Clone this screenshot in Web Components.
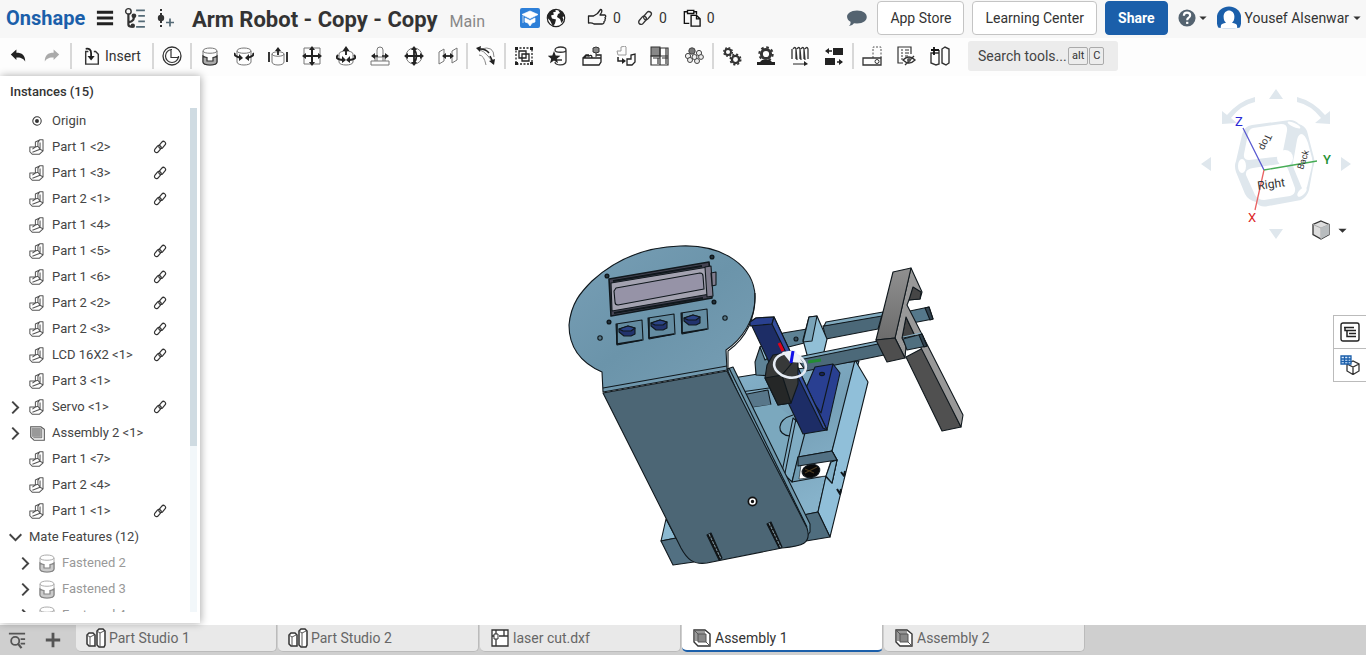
<!DOCTYPE html>
<html lang="en">
<head>
<meta charset="utf-8">
<title>Arm Robot - Copy - Copy</title>
<style>
html,body{margin:0;height:100%}
body{font-family:Roboto,"Liberation Sans",sans-serif;font-size:14px;line-height:20px;color:#333;background:#fff;overflow:hidden}
</style>
</head>
<body>
<cad-app></cad-app>
<script>
const PART = '<path d="M1 9.500h6.500V3.500l5-2.500h4v13l-4.500 4H4l-3-3zM7.500 9.500l3-1V4l2-3M4 12l3.500-2.500M10.500 8.500 13 12l3.500 2M4 15.500l9-3.500V4" fill="none" stroke="#555" stroke-width="1.200" stroke-linejoin="round"/>';
const CYL = '<path d="M3 5c0-4 14-4 14 0v11c0 4-14 4-14 0zM3 5c0 3 14 3 14 0" fill="none" stroke="#777"/>';
const GEAR = (x, y, r) => `<circle cx="${x}" cy="${y}" r="${r}" fill="none" stroke="#333" stroke-width="${r * .65}"/><circle cx="${x}" cy="${y}" r="${r * 1.45}" fill="none" stroke="#333" stroke-width="${r * .45}" stroke-dasharray="${r * .57}"/>`;
const BOXTAB = '<path d="M2 2h11l5 4v12H6l-4-4z" fill="#fff" stroke="#333" stroke-width="1.400"/><path d="M3 3h10v10H3z" fill="#999"/><path d="M6 6h8v8H6z" fill="#888" stroke="#555"/><path d="m2 2 4 4m8 8 4 4" fill="none" stroke="#555"/>';

/* Every icon is drawn in a 20 x 20 box. */
const ICONS = {
  menu:'<path d="M1 3.500h18M1 10h18M1 16.500h18" stroke="#222" stroke-width="3.300"/>',
  tree:'<path d="M4 6v10q0 2 3 2M4 14c5-1 5-3 5-6" fill="none" stroke="#333" stroke-width="2"/><circle cx="4" cy="4" r="2.500" fill="none" stroke="#333" stroke-width="1.300"/><circle cx="9" cy="8" r="2.200" fill="#333"/><circle cx="8" cy="17" r="2" fill="#333"/><path d="M11 3h8M13 8h6M13 13h6M11 18h8" stroke="#546a76" stroke-width="1.500"/>',
  version:'<path d="M5 1v18" stroke="#333" stroke-width="2" stroke-dasharray="2 2"/><circle cx="5" cy="10" r="3.200" fill="#333"/><path d="M10 14.500h8M14 10.500v8" stroke="#546a76" stroke-width="1.700"/>',
  edu:'<rect width="20" height="20" rx="2" fill="#2d7fd8"/><path d="m10 3 8 3.500-8 4-8-4zM5 10l5 2.500L15 10v4l-3 1-2 3-2-3-3-1zM3 8v7" fill="#fff" stroke="#fff" stroke-width=".7"/>',
  globe:'<circle cx="10" cy="10" r="8.700" fill="#fff" stroke="#222" stroke-width="1.200"/><path d="M2 6c2-3 4-4.500 7-4.500l1 2-3 1 1 2-3 1 1 3 4 1-1 4-2 3-3-6-2-2zM12 2l5 2 1.500 4-2 1 1 3-2 3-1.500-4-3-2 1-3 2-1z" fill="#222"/>',
  thumb:'<path d="M1.500 8h5l4-2.500 3-4q2 0 1 3L13 7h5q1.500 1 0 2.500 1 1 0 2 .5 1.500-1 2 .5 2-2 2.500H7q-2-1.500-5.500-1z" fill="none" stroke="#222" stroke-width="1.300" stroke-linejoin="round"/>',
  link:'<g transform="rotate(-50 10 10)" fill="none" stroke="#333" stroke-width="1.700"><rect x="0" y="6.500" width="11.500" height="6" rx="3"/><rect x="8.500" y="7.500" width="11.500" height="6" rx="3"/></g>',
  clip:'<path d="M7 16H1.500V3H5m7 0h3v3M5 1.500h7V5H5zM9 7h6l4 4v8H9zM15 7v4h4" fill="none" stroke="#111" stroke-width="1.500"/>',
  chat:'<path d="M10 2.500c13 0 13 13 0 13l-3-.3Q5 18 2 18q2-2 1.500-4.200C-3 10 0 2.500 10 2.500z" fill="#546370"/>',
  help:'<circle cx="10" cy="10" r="9.500" fill="#546370"/><path d="M6.500 7.500q0-3.500 3.500-3.500t3.500 3q0 2-2 3-1.300.8-1.300 2.500" fill="none" stroke="#fff" stroke-width="2.400"/><path d="M9 14.200h2.500v2.400H9z" fill="#fff"/>',
  user:'<path d="M1 18C-3 8 2 .5 10 .5S23 8 19 18l-4.500 1H5.500z" fill="#1b5faa"/><path d="M5.500 9c0-7 9-7 9 0 0 3-1 4-2 5 5 1 4 2 4.500 5H3c.5-3-.5-4 4.500-5-1-1-2-2-2-5z" fill="#fff"/>',
  caret:'<path d="M1 6h18l-9 9z" fill="#333"/>',
  undo:'<path d="m1 8 7-6v4c7 0 11 3 11 11-3-4.500-6-5-11-5v3z" fill="#222"/>',
  redo:'<path d="m19 8-7-6v4C5 6 1 9 1 17c3-4.500 6-5 11-5v3z" fill="#aaa"/>',
  insert:'<path d="M6 5H3v14h14V8l-3-3h-2" fill="none" stroke="#333" stroke-width="1.600"/><path d="M3 2q6-1 6 5v5" fill="none" stroke="#222" stroke-width="2"/><path d="M5 10h8l-4 5z" fill="#222"/>',
  clock:'<circle cx="10" cy="10" r="9" fill="none" stroke="#333" stroke-width="1.300"/><path d="M10 3.500A6.500 6.500 0 1 0 16.500 10v1.500H9V3.500z" fill="none" stroke="#333" stroke-width="1.200"/>',
  fastened:CYL+'<path d="M3 10q2 1.500 4 1.500v3.500h6v-3.500q2 0 4-1.500v6c0 4-14 4-14 0z" fill="#aaa" stroke="#333" stroke-width="1.200"/>',
  revolute:CYL+'<path d="M1 7q-2 3 6 5m6 0q8-2 6-5" fill="none" stroke="#222" stroke-width="2"/><path d="m5 8 4 4-4 3zm10 0-4 4 4 3z" fill="#222"/>',
  slider:'<path d="M4 8c0-3 12-3 12 0v8c0 4-12 4-12 0zc0 3 12 3 12 0" fill="none" stroke="#777"/><path d="M1 6v10M19 6v10M10 9V4" stroke="#222" stroke-width="1.800"/><path d="m7 5 3-4 3 4z" fill="#222"/>',
  planar:'<path d="M2 2h16v16H2z" fill="none" stroke="#777"/><path d="M10 2v16M2 10h16" stroke="#222" stroke-width="2"/><path d="m7 4 3-4 3 4zm0 12 3 4 3-4zM4 7l-4 3 4 3zm12 0 4 3-4 3z" fill="#222"/>',
  cylindrical:'<path d="M3 8c0-4 14-4 14 0v8c0 4-14 4-14 0z" fill="none" stroke="#777"/><path d="M10 9V3M2 9q-4 4 5 5m11-5q4 4-5 5" fill="none" stroke="#222" stroke-width="1.900"/><path d="m6.500 5 3.500-5 3.500 5zM6 10l4 4-4 3zm8 0-4 4 4 3z" fill="#222"/>',
  pinslot:'<path d="M7 15V4q0-3 3-3t3 3v11M1 15h18v4H1zM5 15v-4h10v4" fill="none" stroke="#777"/><path d="M2 10h6m4 0h6" stroke="#222" stroke-width="1.600"/><path d="m5 7-4 3 4 3zm10 0 4 3-4 3z" fill="#222"/>',
  ball:'<circle cx="10" cy="10" r="8" fill="none" stroke="#777"/><path d="M10 2v16M2 10h16M10 3q5 7 0 14" fill="none" stroke="#222" stroke-width="1.800"/><path d="m7 4 3-4 3 4zm0 12 3 4 3-4zM4 7l-4 3 4 3zm12 0 4 3-4 3z" fill="#222"/>',
  parallel:'<path d="M1 6l5-3v12l-5 3zM14 5l5-3v12l-5 3z" fill="none" stroke="#777"/><path d="M5 10h10" stroke="#222" stroke-width="1.800"/><path d="m8 7-4 3 4 3zm4 0 4 3-4 3z" fill="#222"/>',
  tangent:'<path d="M2 3q6 2 10 7 5 6 5 8M5 3q13-4 13 8M3 9q5 0 7 10" fill="none" stroke="#888"/><path d="M4 3q6 0 9 4m1 3 3 6" fill="none" stroke="#222" stroke-width="1.600"/><path d="m5 0-5 2 4 4zm8 15 5 4 1-6z" fill="#222"/>',
  group:'<path d="M2 2h16v16H2z" fill="none" stroke="#222" stroke-width="1.300" stroke-dasharray="2 1.500"/><path d="M1 1h3v3H1zm15 0h3v3h-3zM1 16h3v3H1zm15 0h3v3h-3z" fill="#222"/><path d="M5 5h7v7H5zM8 8h7v7H8z" fill="none" stroke="#222" stroke-width="1.300"/>',
  mate:'<path d="M7 4c0-4 11-4 11 0v11c0 5-11 5-11 1M7 4c0 3 11 3 11 0M9 14h5" fill="none" stroke="#333" stroke-width="1.300"/><path d="m6 5 1.700 4.500 4.800.2-3.700 3 1.200 4.600L6 14.600l-4 2.700 1.200-4.600-3.700-3 4.800-.2z" fill="#222"/>',
  snap:'<path d="M1 12h18v4l-2 3H1zM1 12l3-3h3m7 0h5v3M3 12q0-3 4-2 3-2 3 2" fill="none" stroke="#222" stroke-width="1.300"/><path d="M11 2q3-2 6 0v4q-3 2-6 0z" fill="#888" stroke="#333"/><path d="M14 7v4" stroke="#333"/>',
  replicate:'<path d="M1 5h4V1l4-1 1 1v8H2z" fill="none" stroke="#999"/><path d="M11 13h4V9l4-1v8l-3 3h-5z" fill="none" stroke="#222" stroke-width="1.300"/><path d="M2 11v4h5" fill="none" stroke="#222" stroke-width="1.500"/><path d="m6 12 4 3-4 3z" fill="#222"/>',
  pattern:'<rect x="1" y="1" width="9" height="9" fill="#888" stroke="#333"/><path d="M10 2h8v8h-8zM1 10h9v9H1zM10 10h8v9h-8zM3 12h7m2 0h6M8 12v6m8-16v16" fill="none" stroke="#333" stroke-width="1.200"/>',
  circular:'<g fill="#eee" stroke="#444"><circle cx="8" cy="5" r="3.200" fill="#777"/><circle cx="15" cy="7" r="2.600"/><circle cx="4" cy="10" r="2.600"/><circle cx="17" cy="11" r="2.400"/><circle cx="6" cy="14" r="2.500"/><circle cx="13" cy="15" r="2.500"/><circle cx="10.500" cy="11" r="2.500"/></g>',
  gears:GEAR(6,6,3)+GEAR(13.500,13.500,3.600),
  rack:GEAR(10,8,4.600)+'<path d="M1 18v-2h3l2-2h8l2 2h3v3H1z" fill="#222"/>',
  screw:'<path d="M2 3v10M6 3l1 11M10 3l1 11M14 3l1 11M3 3q2-3 3 0v10m1-10q2-3 3 0v10m1-10q2-3 3 0v10m1-10q2-3 3 0v10" fill="none" stroke="#333" stroke-width="1.300"/><path d="M3 18h13" stroke="#222"/><path d="m14 15 4 3-4 2z" fill="#222"/>',
  linear:'<path d="M9 2h10v7H9zM1 12h10v7H1z" fill="#222"/><path d="M3 5h5m5 11h5" stroke="#222" stroke-width="1.500"/><path d="m5 2-4 3 4 3zm10 11 4 3-4 3z" fill="#222"/>',
  simulate:'<path d="M11 12V1h8v11" fill="none" stroke="#555" stroke-dasharray="2 1.500"/><path d="M1 12h18v7H1z" fill="none" stroke="#333" stroke-width="1.300"/><circle cx="15" cy="15.500" r="2" fill="none" stroke="#333"/>',
  hide:'<path d="M15 8V1H2v16h5M5 4h2m2 0h4M5 7h2m2 0h4M5 10h2m2 0h3M5 13h2" fill="none" stroke="#333" stroke-width="1.200"/><path d="M7 14q6-6 12 0-6 6-12 0zM9 19l9-9" fill="none" stroke="#333" stroke-width="1.400"/><circle cx="13" cy="14" r="2" fill="#555"/>',
  section:'<path d="M1 7h8v11l-3 1-5-2zM12 3l3-2 4 2v14l-3 2-4-2zM9 4v14" fill="none" stroke="#333" stroke-width="1.400"/><path d="M4 1v8M1 4h8" stroke="#111" stroke-width="1.800"/>',
  origin:'<circle cx="10" cy="10" r="7" fill="none" stroke="#333" stroke-width="1.700"/><circle cx="10" cy="10" r="3.300" fill="#333"/>',
  part:PART,
  assembly:'<path d="M2 2h12l4 3v13H6l-4-4z" fill="#fff" stroke="#555" stroke-width="1.300"/><path d="M3 3h11v11H3z" fill="#999"/><path d="M15 4v11H5" fill="none" stroke="#555"/>',
  right:'<path d="m5 1 9 9-9 9" fill="none" stroke="#444" stroke-width="3"/>',
  down:'<path d="m1 5 9 9 9-9" fill="none" stroke="#444" stroke-width="3"/>',
  search:'<path d="M1 3h18M14 9h5M14 14h5" stroke="#555" stroke-width="2"/><circle cx="8" cy="11" r="4.500" fill="none" stroke="#555" stroke-width="2"/><path d="m11 14 4 5" stroke="#555" stroke-width="2.500"/>',
  plus:'<path d="M10 1v18M1 10h18" stroke="#555" stroke-width="3.500"/>',
  studio:'<path d="M1 7l2-2h4l2 2v11H3l-2-2zM11 3l2-2h4l2 2v14l-1 2h-5l-2-2z" fill="#fff" stroke="#333" stroke-width="1.500"/><path d="M1 7l3 2v9M4 9l4-2M11 3l3 2v14m0-14 4-2" fill="none" stroke="#555"/>',
  drawing:'<path d="M2 2h16v16H2zM6 2v4m0 5v7M2 8h2m5 0h9M14 2v6" fill="#fff" stroke="#333" stroke-width="1.300"/><path d="M4 6h4v5H4z" fill="#fff" stroke="#333"/>',
  boxtab:BOXTAB,
  list:'<rect x="1" y="1" width="18" height="18" rx="2" fill="#fff" stroke="#222" stroke-width="1.400"/><path d="M4 5.500h10M7 8.500h9M9 11.500h7M9 14.500h7M5 6v2.500h3M7 8v6.500h3" fill="none" stroke="#222" stroke-width="1.500"/>',
  bom:'<path d="M7 9l6-3 6 3v7l-6 3.500L7 16zm0 0 6 3 6-3m-6 3v7" fill="#fff" stroke="#333" stroke-width="1.300"/><path d="M1 1h10v8H1zM1 4h10M1 6.500h10M4.500 1v8M8 1v8" fill="#dcecff" stroke="#1b5faa" stroke-width="1.300"/>',
  shaded:'<path d="m10 1 8 3.500v10L10 19l-8-4.500v-10z" fill="#ddd" stroke="#333" stroke-width="1.300"/><path d="m2 4.500 8 3.500 8-3.500M10 8v11" fill="none" stroke="#aaa"/><path d="m10 8 8-3.500v10L10 19z" fill="#b8bcbe"/>'
};

const define = (name, render) => customElements.define(name, class extends HTMLElement {
  connectedCallback() {
    if (this.shadowRoot) return;
    const t = document.createElement('template');
    t.innerHTML = render(this);
    this.attachShadow({mode:'open'}).append(t.content.cloneNode(true));
  }
});
const icon = (name, size = 20) => `<cad-icon name="${name}" size="${size}"></cad-icon>`;

define('cad-icon', el => `
<style>:host{display:block;flex:none;width:${el.getAttribute('size')}px;height:${el.getAttribute('size')}px}svg{display:block;width:100%;height:100%}</style>
<svg viewBox="0 0 20 20" aria-hidden="true">${ICONS[el.getAttribute('name')]}</svg>`);

define('cad-header', () => `
<style>
:host{display:flex;align-items:center;height:38px;background:#f7f7f7;padding:0 5px 2px 6px;box-sizing:border-box;white-space:nowrap}
.group{display:flex;align-items:center}
a.logo{color:#1b5faa;font-weight:700;font-size:20px;line-height:32px;width:80px;text-decoration:none}
button{font:inherit;color:inherit;background:none;border:0;padding:0;display:flex;align-items:center}
.tools{gap:10px;margin-left:10px}
h1{font-size:22px;line-height:32px;font-weight:700;margin:4px 12px 0 16px}
.branch{font-size:16px;color:#888;padding-top:8px}
.badges{gap:6px;margin-left:35px}
.counts{gap:16px;margin-left:21px}
.counts button{gap:6px}
.account{margin-left:auto}
.btn{height:34px;border:1px solid #c4c4c4;border-radius:4px;background:#fff;padding:0 12px;margin-left:8px}
.share{background:#1b5faa;border-color:#1b5faa;color:#fff;font-weight:700}
.chat{margin-right:2px}
.help{gap:3px;margin:0 10px}
.user{gap:4px}
</style>
<a class="logo" href="#">Onshape</a>
<div class="group tools"><button aria-label="Menu">${icon('menu',18)}</button><button aria-label="Versions">${icon('tree',22)}</button><button aria-label="Create version">${icon('version')}</button></div>
<h1>Arm Robot - Copy - Copy</h1><span class="branch">Main</span>
<div class="group badges">${icon('edu')}${icon('globe')}</div>
<div class="group counts"><button aria-label="Likes">${icon('thumb')}<span>0</span></button><button aria-label="Links">${icon('link',16)}<span>0</span></button><button aria-label="Copies">${icon('clip',18)}<span>0</span></button></div>
<div class="group account"><button class="chat" aria-label="Comments">${icon('chat')}</button>
<button class="btn">App Store</button><button class="btn">Learning Center</button><button class="btn share">Share</button>
<button class="help" aria-label="Help">${icon('help',18)}${icon('caret',8)}</button>
<button class="user">${icon('user',24)}<span>Yousef Alsenwar</span>${icon('caret',8)}</button></div>`);

const TOOLS = [['clock'],['fastened','revolute','slider','planar','cylindrical','pinslot','ball','parallel'],['tangent'],['group','mate','snap','replicate','pattern','circular'],['gears','rack','screw','linear'],['simulate','hide','section']];
define('cad-toolbar', () => `
<style>
:host{display:flex;align-items:center;box-sizing:border-box;height:38px;padding:0 0 2px 1px;background:#fdfdfd;white-space:nowrap}
button{font:inherit;color:inherit;width:34px;height:34px;border:0;background:none;padding:0;display:flex;align-items:center;justify-content:center;flex:none}
.insert{width:78px;gap:4px}
i{width:2px;height:26px;margin:0 1px;background:#d8d8d8;flex:none}
label{display:flex;align-items:center;box-sizing:border-box;width:150px;height:30px;margin-left:11px;padding:0 10px;background:#ececec;border-radius:3px}
input{font:inherit;width:89px;border:0;background:none;padding:0;color:#333;outline:0}
input::placeholder{color:#444;opacity:1}
kbd{font:11px/16px Roboto,sans-serif;border:1px solid #aaa;border-radius:2px;padding:0 3px;margin-left:1px}
</style>
<button aria-label="Undo">${icon('undo',16)}</button><button aria-label="Redo">${icon('redo',16)}</button><i></i>
<button class="insert">${icon('insert',18)}<span>Insert</span></button>
${TOOLS.map(g => '<i></i>' + g.map(n => `<button aria-label="${n}">${icon(n)}</button>`).join('')).join('')}
<label><input placeholder="Search tools..." aria-label="Search tools"><kbd>alt</kbd><kbd>C</kbd></label>`);

define('cad-row', el => {
  const a = n => el.getAttribute(n);
  const size = {origin:12, fastened:20}[a('kind')] || 17;
  return `
<style>
:host{display:grid;grid-template-columns:14px 16px 1fr 14px;align-items:center;column-gap:7px;height:26px;padding:0 23px 0 8px;color:#444;white-space:nowrap;font-size:13px}
:host([child]){padding-left:18px;color:#999}
:host([child]) .kind{opacity:.6}
:host([section]){grid-template-columns:14px 1fr}
button{border:0;padding:0;background:none;justify-self:center}
.kind{justify-self:center}
</style>
${a('open') ? `<button aria-label="Toggle">${icon(a('open'),13)}</button>` : '<span></span>'}
${el.hasAttribute('section') ? '' : `<span class="kind">${icon(a('kind'), size)}</span>`}
<span><slot></slot></span>${el.hasAttribute('linked') ? icon('link',14) : ''}`;
});

const ROWS = [['Part 1 <2>',1],['Part 1 <3>',1],['Part 2 <1>',1],['Part 1 <4>',0],['Part 1 <5>',1],['Part 1 <6>',1],['Part 2 <2>',1],['Part 2 <3>',1],['LCD 16X2 <1>',1],['Part 3 <1>',0],['Servo <1>',1,'right'],['Assembly 2 <1>',0,'right','assembly'],['Part 1 <7>',0],['Part 2 <4>',0],['Part 1 <1>',1]];
define('cad-instances', () => `
<style>
:host{display:flex;flex-direction:column;box-sizing:border-box;padding:0 3px 11px 0;background:#fff;box-shadow:1px 0 8px #0005;min-height:0}
h2{font-size:13px;line-height:32px;font-weight:500;margin:0 0 0 10px;color:#333;flex:none}
.body{display:flex;flex:1;min-height:0}
.rows{flex:1;overflow:hidden}
.track{width:7px;background:#f2f7fa}
.thumb{height:67%;background:#cfdbe2}
</style>
<h2>Instances (15)</h2>
<div class="body"><div class="rows"><cad-row kind="origin">Origin</cad-row>
${ROWS.map(([t,l,o,k]) => `<cad-row kind="${k || 'part'}" ${l ? 'linked' : ''} ${o ? `open="${o}"` : ''}>${t.replace('<','&lt;')}</cad-row>`).join('')}
<cad-row section open="down">Mate Features (12)</cad-row>
${[2,3,4].map(n => `<cad-row child kind="fastened" open="right">Fastened ${n}</cad-row>`).join('')}
</div><div class="track"><div class="thumb"></div></div></div>`);

const toggle = (x, y) => `<g transform="translate(${x} ${y})"><path d="m0 3 26-4 1 20-26 5z" fill="#648ca1"/><path d="M1 3v20l25-4" fill="none" stroke-width="1.600"/><path d="m3 8 9-3 7 2v6l-4 2H8l-5-4z" fill="#22336d"/><path d="m3 8 9-3 7 2-4 3H7z" fill="#2b4385"/></g>`;
define('cad-model', () => `
<style>:host{display:block}svg{display:block;width:100%;height:100%}</style>
<svg viewBox="200 76 1166 549" role="img" aria-label="Arm robot model">
<defs>
<linearGradient id="head" x2="1" y2="1"><stop stop-color="#789fb6"/><stop offset=".5" stop-color="#6b94aa"/><stop offset="1" stop-color="#789fb5"/></linearGradient>
<linearGradient id="base" x2=".4" y2="1"><stop stop-color="#86b3cc"/><stop offset=".5" stop-color="#76a0b7"/><stop offset="1" stop-color="#86b2ca"/></linearGradient>
<linearGradient id="grey" x2="0" y2="1"><stop stop-color="#909090"/><stop offset="1" stop-color="#6c6c6c"/></linearGradient>
</defs>
<g stroke="#10181d" stroke-width="1.100" stroke-linejoin="round">
<path d="m666 519 10 19-15 3z" fill="#8bb9d1"/><path d="m661 541 15-3 18 24-21 3z" fill="#527082"/>
<path d="m733 378 25-4 101-13-27 90-14 61-14 3z" fill="url(#base)"/>
<path d="m855 360 13 22-38 155-12-25 8-36 6 7 5-23-5-9z" fill="#90bfd9"/>
<path d="m803 515 15-3 12 25-24 4z" fill="#4f6d7e"/>
<path d="m742 395 26-5 3 15-22 3z" fill="#58778a"/><path d="m741 392 28-4" fill="none"/>
<path d="m749 408 26-4 18 14-11 54z" fill="#7ba8be" stroke="none"/>
<path d="m793 418-11 54 10 10 14-53z" fill="#80adc4"/><path d="m796 419-11 54" fill="none"/>
<path d="M793 415c-17 5-17 20-3 21" fill="none"/>
<path d="m798 457 34-6 5 9-5 23-7-7-33 6z" fill="#6f9bb1"/><path d="m801 465 30-5-5 16-27 3z" fill="#fff" stroke-width=".6"/><path d="m798 457 34-6 5 9-39 6z" fill="#527184"/><path d="m831 462-5 14 6 7 5-23z" fill="#82b0c8"/>
<ellipse cx="811" cy="471" rx="9" ry="6.500" transform="rotate(-15 811 471)" fill="#080808"/><path d="m805 473 12-6m-12 2 9 4" stroke="#4a3a20"/>
<path d="m841 472 3 4 1-5m-8 18 3 5 1-5" fill="none" stroke-width="2"/>
<path d="m727 369 6-2 77 157v8l-6 8z" fill="#6e96aa"/><path d="m729 368 78 159" fill="none"/>
<path d="m603 393 124-22 80 157c5 16-5 18-25 20l-75 15c-14 2-20-4-26-15z" fill="#4c6675"/>
<path d="m707 535 4-2 11 25-3 2zM767 524l4-2 11 25-3 1z" fill="#111"/><path d="m709 534 12 25m48-36 12 25" stroke="#79909b" stroke-dasharray="3 1"/>
<path d="M603 392l-1-20c-23-10-33-27-33-47 2-22 12-33 23-44 25-23 55-34 88-35 44-2 74 21 75 50 1 24-14 44-29 54l1 20z" fill="url(#head)"/>
<path d="m603 388 124-22M755 293q1 38-27 58v20" fill="none"/>
<path d="m609 279 100-17 3 36-101 18z" fill="#454453" stroke-width="1.600"/><path d="m611 283 97-16 2 27-98 17z" fill="#a3a2b0"/><path d="m616 288 84-15q3 0 3 3l1 13-86 16q-3 0-3-3l-1-11z" fill="#9693a7"/><path d="m705 267 6-1 2 30-6 1zM711 273l5-1v13l-4 1z" fill="#807d8e"/>
<path d="m613 281 89-15m-88 47 89-15" stroke-width="2.200"/>
${toggle(616,321)}${toggle(648,315)}${toggle(681,310)}
<g fill="#263944" stroke-width="1.500"><circle cx="712" cy="257" r="1.800"/><circle cx="607" cy="276" r="1.800"/><circle cx="714" cy="302" r="1.800"/><circle cx="609" cy="322" r="1.800"/></g><g fill="#587888"><circle cx="725" cy="318" r="2.200"/><circle cx="600" cy="338" r="2.200"/></g>
<circle cx="752.500" cy="501.500" r="4" fill="#111" stroke="#111" stroke-width="2"/><circle cx="752.500" cy="501.500" r="2.500" fill="none" stroke="#fff" stroke-width="1.600"/>
<path d="m760 347 23-14 24-4 1 13-39 10 4 24-17-1-1-13z" fill="#5e8295"/><path d="m760 347 19-10 5 11-19 12z" fill="#94c2da"/><circle cx="796" cy="339" r="2" fill="#354c59"/>
<path d="m823 326 59-11-4 14-52 10z" fill="#4b6878"/><path d="m826 322 57-10-1 4-58 10z" fill="#81aabe"/>
<path d="m803 340 6-23 8-1 10 23-5 21-13 2z" fill="#91bfd6"/><path d="m809 317 8-1-5 25-9 1z" fill="#79a3b8"/>
<path d="m798 360 81-18 5 13-78 16z" fill="#4c6979"/><path d="m798 357 80-16v3l-79 16z" fill="#80aabf"/>
<path d="m815 367 18-3 7 9-13 57-24-35z" fill="#293f91"/><path d="m833 364-12 49-18-26" fill="none"/><ellipse cx="822" cy="374" rx="2.500" ry="1.600" fill="#17245f"/>
<path d="m750 322 6-4 18-1 53 113-24 4z" fill="#1d2d66"/><path d="m750 322 6-4 18-1-2 7-22 2z" fill="#29408f"/><path d="m774 317 53 113-4-2-51-104z" fill="#354f9e"/>
<path d="m767 365 6-10 19-3 6 9v23l-7 19-13 2-13-27z" fill="#373939"/><path d="m765 378 17-3 9 28-13 2zM782 375l15-18" fill="#252727"/>
<path d="m905 312 24-5 4 12-26 5z" fill="#55788b"/><path d="m929 307 4 12-3 1-5-12z" fill="#32434f"/>
<path d="m906 357 17-9 38 79-19 4z" fill="#505050"/>
<path d="m906 317 9 19-13 2z" fill="#464646"/>
<path fill-rule="evenodd" d="m911 268 11 24-2 7-11 1-2 5 56 110-2 12-46-91-9-19-4 21 4 8-1 12-10-20z" fill="#989898"/><path d="m893 272 18-4-16 70-19 2z" fill="url(#grey)"/><path d="m876 340 19-2 10 20-18 4z" fill="#4e4e4e"/><path d="m913 287 8 5-1 7-11 1z" fill="#464646"/>
<path d="m903 339 19-5 5 12-20 4z" fill="#506f7f"/><path d="m903 337 18-4" stroke="#86aec2"/><path d="m922 334 5 12-3 1-5-12z" fill="#32434f"/>
</g>
<ellipse cx="790" cy="365.500" rx="16" ry="12" transform="rotate(12 790 365.500)" fill="none" stroke="#e6ecf5" stroke-width="2.600"/>
<path d="m782 352 13-2 8 13-13-1z" fill="#edf1f6"/><path d="m779 343 4 8" stroke="#e00018" stroke-width="3"/><path d="m793 351-2 12" stroke="#1010e8" stroke-width="3"/><path d="m808 362 13-2" stroke="#238b35" stroke-width="3"/>
</svg>`);

define('cad-view-cube', () => `
<style>
:host{display:block;position:relative;width:176px;height:170px}
svg{display:block;width:100%;height:100%}
button{position:absolute;right:19px;bottom:10px;display:flex;align-items:center;gap:7px;border:0;background:none;padding:0}
text{font-family:Roboto,sans-serif}
</style>
<svg viewBox="1190 80 176 170" role="img" aria-label="View cube">
<g fill="#dfe7ed"><path d="m1276 89 7 10h-14zM1276 239l7-10h-14zM1201 164l10-7v14zM1351 164l-10-7v14z"/>
<path d="M1222 111l5 4q12-14 28-18v5q-14 3-24 16l6 5-15 1zM1330 111l-5 4q-12-14-28-18v5q14 3 24 16l-6 5 15 1z"/>
<path d="M1252 125l38-5q5 0 9 4 6 2 8 7l7 27q1 5-1 10l-4 22q-2 7-8 10l-33 6q-8 2-12-4-8-2-11-8l-9-22q-2-6 0-11l6-26q2-9 10-10z"/></g>
<g fill="#fff"><path d="M1253 128l28-4q7 0 6 7l-4 20q-2 6-8 6l-26 3q-6 0-5-6l4-20q1-5 5-6z"/><path d="M1253 168l26-4q6 0 9 5l7 19q1 6-5 8l-26 4q-6 0-9-5l-9-20q-1-6 7-7z"/><path d="M1301 134q4 0 7 9l4 15q1 5-1 12l-4 17q-3 6-6-1l-7-17q-2-5 0-12l3-17q1-5 4-6z"/><circle cx="1285" cy="158" r="8"/><ellipse cx="1242" cy="166" rx="4" ry="7"/><ellipse cx="1294" cy="125" rx="7" ry="2" transform="rotate(25 1294 125)"/><ellipse cx="1302" cy="192" rx="6" ry="3" transform="rotate(-45 1302 192)"/></g>
<path d="m1243 128 21 42" stroke="#5656d0" stroke-width="1.300"/><path d="m1264 170-9 40" stroke="#e96262" stroke-width="1.300"/><path d="m1264 170 53-9" stroke="#46ac55" stroke-width="1.300"/>
<text x="1235" y="126" font-size="13" fill="#2929d6">Z</text><text x="1248" y="222" font-size="13" fill="#dc2525">X</text><text x="1323" y="164" font-size="13" font-weight="500" fill="#269236">Y</text>
<text x="1258" y="190" font-size="12" fill="#333" transform="rotate(-8 1258 190)">Right</text>
<text x="1266" y="133" font-size="10" fill="#333" transform="rotate(115 1266 133)">Top</text>
<text x="1303" y="170" font-size="9" fill="#333" transform="rotate(-72 1303 170)">Back</text>
</svg>
<button aria-label="Display style">${icon('shaded')}${icon('caret',9)}</button>`);

define('cad-viewport', () => `
<style>
:host{display:block;position:relative;min-width:0;min-height:0;background:#fff}
cad-model{height:100%}
cad-view-cube{position:absolute;top:4px;right:0}
nav{position:absolute;right:0;top:239px;width:33px;box-sizing:border-box;border:1px solid #bbb;border-right:0;background:#fff}
nav button{display:flex;width:100%;height:32px;border:0;padding:0;background:none;align-items:center;justify-content:center}
nav button+button{border-top:1px solid #bbb;height:33px}
</style>
<cad-model></cad-model><cad-view-cube></cad-view-cube>
<nav><button aria-label="Configurations">${icon('list')}</button><button aria-label="Bill of materials">${icon('bom')}</button></nav>`);

define('cad-tab', el => `
<style>
:host{display:block;width:201px;height:27px;flex:0 1 201px}
a{display:flex;align-items:center;gap:3px;height:100%;box-sizing:border-box;padding:0 10px;border-right:1px solid #bbb;border-bottom:1px solid #bbb;border-radius:0 0 5px 5px;background:#e9e9e9;color:#666;text-decoration:none;white-space:nowrap}
:host([active]) a{background:#fff;color:#333;border-bottom:2px solid #1b5faa}
</style><a href="#">${icon(el.getAttribute('kind'))}<slot></slot></a>`);

define('cad-tabs', () => `
<style>
:host{display:flex;gap:1px;height:30px;background:#cfcfcf}
.tools{display:flex;align-items:center;width:75px;gap:19px;padding-left:8px;box-sizing:border-box;flex:none}
button{border:0;background:none;padding:0}
</style>
<div class="tools"><button aria-label="Find tab">${icon('search',18)}</button><button aria-label="Add tab">${icon('plus',16)}</button></div>
<cad-tab kind="studio">Part Studio 1</cad-tab><cad-tab kind="studio">Part Studio 2</cad-tab><cad-tab kind="drawing">laser cut.dxf</cad-tab><cad-tab kind="boxtab" active>Assembly 1</cad-tab><cad-tab kind="boxtab">Assembly 2</cad-tab>`);

define('cad-app', () => `
<style>
:host{display:grid;grid-template-rows:auto auto minmax(0,1fr) auto;height:100vh}
main{display:grid;grid-template-columns:200px minmax(0,1fr);grid-template-rows:minmax(0,1fr);min-height:0}
cad-instances{position:relative;z-index:1;margin-bottom:2px}
</style>
<cad-header></cad-header><cad-toolbar></cad-toolbar>
<main><cad-instances></cad-instances><cad-viewport></cad-viewport></main>
<cad-tabs></cad-tabs>`);
</script>
</body>
</html>
